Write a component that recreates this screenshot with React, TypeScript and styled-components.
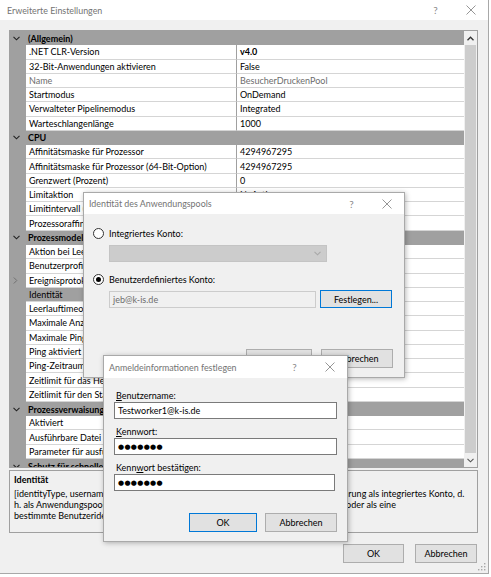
import React from 'react';
import styled, { createGlobalStyle } from 'styled-components';

const FONT = '"Lato", "Noto Sans", sans-serif';

const Global = createGlobalStyle`
  html, body { margin: 0; padding: 0; background: #ffffff; }
  body { font-family: ${FONT}; font-size: 9px; color: #000; }
  * { box-sizing: border-box; }
`;

const Window = styled.div`
  position: relative;
  width: 489px;
  height: 574px;
  background: #f0f0f0;
  border-right: 1px solid #a8a8a8;
  border-bottom: 1px solid #a8a8a8;
  display: flex;
  flex-direction: column;
  overflow: hidden;
`;

const TitleBar = styled.div<{ $h: number }>`
  height: ${(p) => p.$h}px;
  flex-shrink: 0;
  background: #ffffff;
  display: flex;
  align-items: center;
  padding-left: 7px;
  color: #737373;
  font-size: 8.9px;
`;

const TitleText = styled.div`
  flex: 1;
  white-space: nowrap;
`;

const TitleBtn = styled.div`
  width: 35px;
  height: 100%;
  display: flex;
  align-items: center;
  justify-content: center;
  color: #8a8a8a;
  font-size: 10px;
`;

const MainBody = styled.div`
  flex: 1;
  display: flex;
  flex-direction: column;
  padding: 10px 11px 0 9px;
`;

const Grid = styled.div`
  display: flex;
  width: 469px;
  height: 438px;
  border: 1px solid #a0a0a0;
  background: #f0f0f0;
`;

const Rows = styled.div`
  width: 454px;
  display: flex;
  flex-direction: column;
  overflow: hidden;
`;

const RowWrap = styled.div`
  display: grid;
  grid-template-columns: 16px 211px 1fr;
  height: 14.27px;
  flex-shrink: 0;
`;

const MarginCell = styled.div`
  background: #a0a0a0;
  display: flex;
  align-items: center;
  padding-left: 3px;
`;

const NameCell = styled.div<{ $selected?: boolean; $muted?: boolean }>`
  background: ${(p) => (p.$selected ? '#a0a0a0' : '#ffffff')};
  color: ${(p) => (p.$muted ? '#6d6d6d' : '#000')};
  border-bottom: 1px solid #d5d5d5;
  border-right: 1px solid #a0a0a0;
  padding-left: 3px;
  display: flex;
  align-items: center;
  white-space: nowrap;
  overflow: hidden;
`;

const ValueCell = styled.div<{ $bold?: boolean; $muted?: boolean }>`
  background: #ffffff;
  color: ${(p) => (p.$muted ? '#6d6d6d' : '#000')};
  font-weight: ${(p) => (p.$bold ? 700 : 400)};
  border-bottom: 1px solid #d5d5d5;
  padding-left: 3px;
  display: flex;
  align-items: center;
  white-space: nowrap;
  overflow: hidden;
`;

const CatLabel = styled.div`
  grid-column: 2 / 4;
  background: #a0a0a0;
  font-weight: 700;
  padding-left: 2px;
  display: flex;
  align-items: center;
  white-space: nowrap;
`;

const ScrollBar = styled.div`
  width: 13px;
  display: flex;
  flex-direction: column;
  background: #f0f0f0;
`;

const ScrollBtn = styled.div`
  height: 14px;
  flex-shrink: 0;
  display: flex;
  align-items: center;
  justify-content: center;
`;

const Thumb = styled.div`
  flex: 1;
  margin: 0 1px 0 1px;
  background: #cdcdcd;
`;

const DescPanel = styled.div`
  margin-top: 2px;
  width: 469px;
  height: 63px;
  border: 1px solid #a0a0a0;
  padding: 3px 0 0 4px;
  line-height: 11px;
  overflow: hidden;
`;

const DescTitle = styled.div`
  font-weight: 700;
  margin-bottom: 3px;
`;

const DescLine = styled.div`
  white-space: nowrap;
`;

const Footer = styled.div`
  margin-top: 11px;
  display: flex;
  justify-content: flex-end;
  gap: 11px;
`;

const Button = styled.div<{ $w: number; $primary?: boolean; $h?: number }>`
  width: ${(p) => p.$w}px;
  height: ${(p) => p.$h ?? 19}px;
  background: #e1e1e1;
  border: 1px solid ${(p) => (p.$primary ? '#0078d7' : '#adadad')};
  display: flex;
  align-items: center;
  justify-content: center;
  white-space: nowrap;
`;

const Grip = styled.div`
  position: absolute;
  right: 2px;
  bottom: 2px;
  width: 9px;
  height: 9px;
`;

const Dialog = styled.div<{ $x: number; $y: number; $w: number; $h: number }>`
  position: absolute;
  left: ${(p) => p.$x}px;
  top: ${(p) => p.$y}px;
  width: ${(p) => p.$w}px;
  height: ${(p) => p.$h}px;
  background: #f0f0f0;
  border: 1px solid #a9a9a9;
  box-shadow: 1px 1px 5px rgba(0, 0, 0, 0.28);
  display: flex;
  flex-direction: column;
`;

const DialogTitle = styled(TitleBar)`
  padding-left: 5px;
`;

const DialogBody = styled.div<{ $pl: number }>`
  flex: 1;
  display: flex;
  flex-direction: column;
  padding: 0 0 0 ${(p) => p.$pl}px;
`;

const RadioRow = styled.div<{ $mt: number }>`
  margin-top: ${(p) => p.$mt}px;
  height: 12px;
  display: flex;
  align-items: center;
  gap: 5px;
`;

const Radio = styled.div<{ $checked?: boolean }>`
  width: 11px;
  height: 11px;
  border-radius: 50%;
  border: 1px solid #333333;
  background: #ffffff;
  display: flex;
  align-items: center;
  justify-content: center;
  &::after {
    content: '';
    width: 5px;
    height: 5px;
    border-radius: 50%;
    background: ${(p) => (p.$checked ? '#000' : 'transparent')};
  }
`;

const Combo = styled.div`
  margin: 6px 0 0 16px;
  width: 218px;
  height: 17px;
  background: #cccccc;
  border: 1px solid #c4c4c4;
  display: flex;
  align-items: center;
  justify-content: flex-end;
  padding-right: 5px;
`;

const FieldRow = styled.div`
  margin: 5px 0 0 16px;
  display: flex;
  align-items: center;
  gap: 4px;
`;

const TextBox = styled.div<{ $w: number; $disabled?: boolean }>`
  width: ${(p) => p.$w}px;
  height: 17px;
  background: ${(p) => (p.$disabled ? '#f0f0f0' : '#ffffff')};
  border: 1px solid ${(p) => (p.$disabled ? '#cccccc' : '#7a7a7a')};
  color: ${(p) => (p.$disabled ? '#6d6d6d' : '#000')};
  padding-left: 3px;
  display: flex;
  align-items: center;
  white-space: nowrap;
`;

const Dots = styled.span`
  font-family: "DejaVu Sans", sans-serif;
  font-size: 7px;
  letter-spacing: 0.3px;
`;

const DialogFooter = styled.div<{ $gap: number; $pr: number }>`
  margin-top: auto;
  display: flex;
  justify-content: flex-end;
  gap: ${(p) => p.$gap}px;
  padding: 0 ${(p) => p.$pr}px 9px 0;
`;

const Label = styled.div<{ $mt: number }>`
  margin-top: ${(p) => p.$mt}px;
  height: 13px;
  line-height: 13px;
  padding-left: 2px;
  white-space: nowrap;
`;

type Item =
  | { kind: 'cat'; label: string }
  | {
      kind: 'row';
      name: string;
      value?: string;
      bold?: boolean;
      muted?: boolean;
      selected?: boolean;
      expandable?: boolean;
    };

const items: Item[] = [
  { kind: 'cat', label: '(Allgemein)' },
  { kind: 'row', name: '.NET CLR-Version', value: 'v4.0', bold: true },
  { kind: 'row', name: '32-Bit-Anwendungen aktivieren', value: 'False' },
  { kind: 'row', name: 'Name', value: 'BesucherDruckenPool', muted: true },
  { kind: 'row', name: 'Startmodus', value: 'OnDemand' },
  { kind: 'row', name: 'Verwalteter Pipelinemodus', value: 'Integrated' },
  { kind: 'row', name: 'Warteschlangenlänge', value: '1000' },
  { kind: 'cat', label: 'CPU' },
  { kind: 'row', name: 'Affinitätsmaske für Prozessor', value: '4294967295' },
  { kind: 'row', name: 'Affinitätsmaske für Prozessor (64-Bit-Option)', value: '4294967295' },
  { kind: 'row', name: 'Grenzwert (Prozent)', value: '0' },
  { kind: 'row', name: 'Limitaktion', value: 'NoAction' },
  { kind: 'row', name: 'Limitintervall (Minuten)', value: '5' },
  { kind: 'row', name: 'Prozessoraffinität aktiviert', value: 'False' },
  { kind: 'cat', label: 'Prozessmodell' },
  { kind: 'row', name: 'Aktion bei Leerlauftimeout', value: 'Terminate' },
  { kind: 'row', name: 'Benutzerprofil laden', value: 'True' },
  { kind: 'row', name: 'Ereignisprotokolleinträge generieren', value: '', expandable: true },
  { kind: 'row', name: 'Identität', value: 'jeb@k-is.de', selected: true },
  { kind: 'row', name: 'Leerlauftimeout (Minuten)', value: '20' },
  { kind: 'row', name: 'Maximale Anzahl von Arbeitsprozessen', value: '1' },
  { kind: 'row', name: 'Maximale Pingantwortzeit (Sekunden)', value: '90' },
  { kind: 'row', name: 'Ping aktiviert', value: 'True' },
  { kind: 'row', name: 'Ping-Zeitraum (Sekunden)', value: '30' },
  { kind: 'row', name: 'Zeitlimit für das Herunterfahren (Sekunden)', value: '90' },
  { kind: 'row', name: 'Zeitlimit für den Start (Sekunden)', value: '90' },
  { kind: 'cat', label: 'Prozessverwaisung' },
  { kind: 'row', name: 'Aktiviert', value: 'False' },
  { kind: 'row', name: 'Ausführbare Datei', value: '' },
  { kind: 'row', name: 'Parameter für ausführbare Datei', value: '' },
  { kind: 'cat', label: 'Schutz für schnelle Fehler' },
];

const ChevronDown = ({ color = '#222' }: { color?: string }) => (
  <svg width="7" height="5" viewBox="0 0 7 5">
    <polyline points="0.5,0.8 3.5,3.8 6.5,0.8" fill="none" stroke={color} strokeWidth="1.1" />
  </svg>
);

const ChevronUp = () => (
  <svg width="7" height="5" viewBox="0 0 7 5">
    <polyline points="0.5,4.2 3.5,1.2 6.5,4.2" fill="none" stroke="#333" strokeWidth="1.3" />
  </svg>
);

const ChevronRight = () => (
  <svg width="5" height="7" viewBox="0 0 5 7">
    <polyline points="0.8,0.5 3.8,3.5 0.8,6.5" fill="none" stroke="#707070" strokeWidth="1" />
  </svg>
);

const CloseIcon = () => (
  <svg width="10" height="10" viewBox="0 0 10 10">
    <line x1="0.5" y1="0.5" x2="9.5" y2="9.5" stroke="#8a8a8a" strokeWidth="0.9" />
    <line x1="9.5" y1="0.5" x2="0.5" y2="9.5" stroke="#8a8a8a" strokeWidth="0.9" />
  </svg>
);

const GripIcon = () => (
  <svg width="9" height="9" viewBox="0 0 9 9">
    {[
      [7, 1],
      [4, 4],
      [7, 4],
      [1, 7],
      [4, 7],
      [7, 7],
    ].map(([x, y], i) => (
      <rect key={i} x={x} y={y} width="1.4" height="1.4" fill="#a8a8a8" />
    ))}
  </svg>
);

const TitleControls = () => (
  <>
    <TitleBtn>?</TitleBtn>
    <TitleBtn>
      <CloseIcon />
    </TitleBtn>
  </>
);

const PropertyGrid = () => (
  <Grid>
    <Rows>
      {items.map((it, i) =>
        it.kind === 'cat' ? (
          <RowWrap key={i}>
            <MarginCell>
              <ChevronDown />
            </MarginCell>
            <CatLabel>{it.label}</CatLabel>
          </RowWrap>
        ) : (
          <RowWrap key={i}>
            <MarginCell>{it.expandable ? <ChevronRight /> : null}</MarginCell>
            <NameCell $selected={it.selected} $muted={it.muted}>
              {it.name}
            </NameCell>
            <ValueCell $bold={it.bold} $muted={it.muted}>
              {it.value}
            </ValueCell>
          </RowWrap>
        )
      )}
    </Rows>
    <ScrollBar>
      <ScrollBtn>
        <ChevronUp />
      </ScrollBtn>
      <Thumb />
      <ScrollBtn>
        <ChevronDown color="#555" />
      </ScrollBtn>
    </ScrollBar>
  </Grid>
);

const IdentityDialog = () => (
  <Dialog $x={83} $y={192} $w={322} $h={186}>
    <DialogTitle $h={21}>
      <TitleText>Identität des Anwendungspools</TitleText>
      <TitleControls />
    </DialogTitle>
    <DialogBody $pl={9}>
      <RadioRow $mt={13}>
        <Radio />
        <span>Integriertes Konto:</span>
      </RadioRow>
      <Combo>
        <ChevronDown color="#a8a8a8" />
      </Combo>
      <RadioRow $mt={11}>
        <Radio $checked />
        <span>Benutzerdefiniertes Konto:</span>
      </RadioRow>
      <FieldRow>
        <TextBox $w={207} $disabled>
          jeb@k-is.de
        </TextBox>
        <Button $w={72} $h={18} $primary>
          Festlegen...
        </Button>
      </FieldRow>
      <DialogFooter $gap={9} $pr={11}>
        <Button $w={66}>OK</Button>
        <Button $w={72}>Abbrechen</Button>
      </DialogFooter>
    </DialogBody>
  </Dialog>
);

const CredentialsDialog = () => (
  <Dialog $x={103} $y={355} $w={245} $h={187}>
    <DialogTitle $h={22}>
      <TitleText>Anmeldeinformationen festlegen</TitleText>
      <TitleControls />
    </DialogTitle>
    <DialogBody $pl={10}>
      <Label $mt={11}>
        <u>B</u>enutzername:
      </Label>
      <TextBox $w={223}>Testworker1@k-is.de</TextBox>
      <Label $mt={6}>
        <u>K</u>ennwort:
      </Label>
      <TextBox $w={223}>
        <Dots>●●●●●●●</Dots>
      </TextBox>
      <Label $mt={6}>
        Kenn<u>w</u>ort bestätigen:
      </Label>
      <TextBox $w={221}>
        <Dots>●●●●●●●</Dots>
      </TextBox>
      <DialogFooter $gap={8} $pr={10}>
        <Button $w={68} $primary>
          OK
        </Button>
        <Button $w={72}>Abbrechen</Button>
      </DialogFooter>
    </DialogBody>
  </Dialog>
);

export default function App() {
  return (
    <>
      <Global />
      <Window>
        <TitleBar $h={20}>
          <TitleText>Erweiterte Einstellungen</TitleText>
          <TitleControls />
        </TitleBar>
        <MainBody>
          <PropertyGrid />
          <DescPanel>
            <DescTitle>Identität</DescTitle>
            <DescLine>
              [identityType, username, password] Konfiguriert den Anwendungspool für die Ausführung als integriertes Konto, d.
            </DescLine>
            <DescLine>
              h. als Anwendungspoolidentität, Netzwerkdienst, lokales System oder lokaler Dienst oder als eine
            </DescLine>
            <DescLine>bestimmte Benutzeridentität.</DescLine>
          </DescPanel>
          <Footer>
            <Button $w={61}>OK</Button>
            <Button $w={62}>Abbrechen</Button>
          </Footer>
        </MainBody>
        <Grip>
          <GripIcon />
        </Grip>
        <IdentityDialog />
        <CredentialsDialog />
      </Window>
    </>
  );
}
